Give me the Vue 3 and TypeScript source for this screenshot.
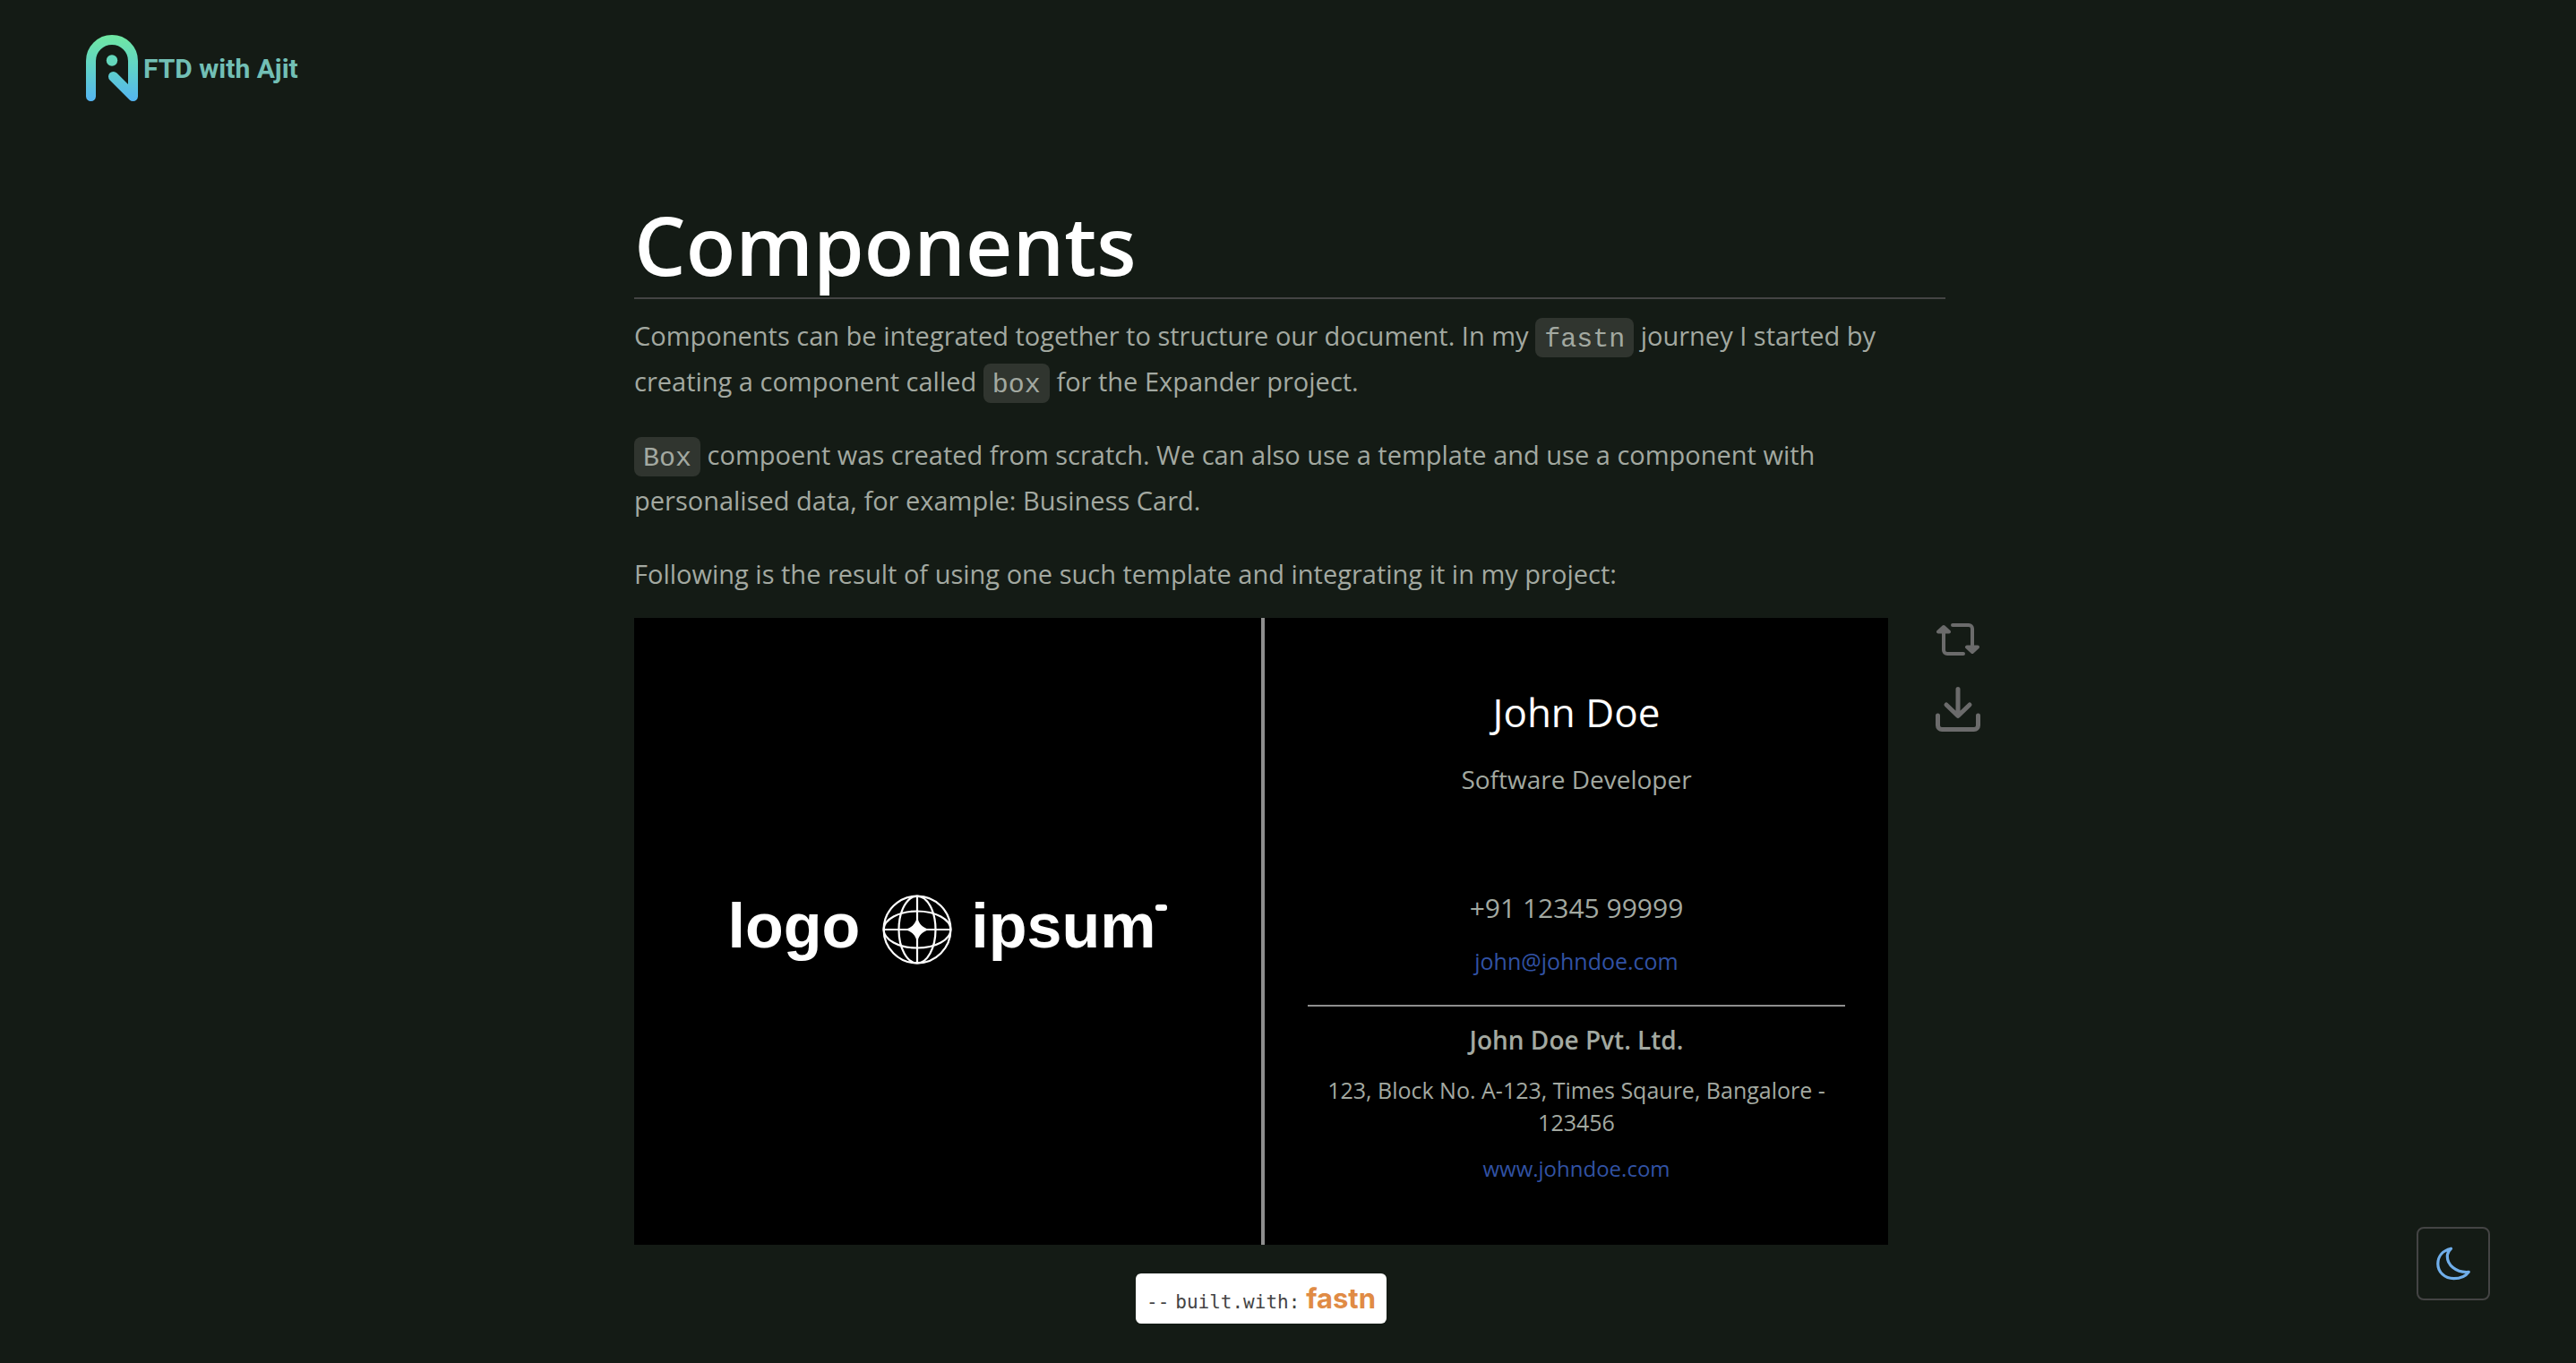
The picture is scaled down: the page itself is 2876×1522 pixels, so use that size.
<script setup lang="ts">
import { ref } from 'vue'

interface Contact {
  name: string
  role: string
  phone: string
  email: string
  company: string
  address: string
  website: string
}

const contact: Contact = {
  name: 'John Doe',
  role: 'Software Developer',
  phone: '+91 12345 99999',
  email: 'john@johndoe.com',
  company: 'John Doe Pvt. Ltd.',
  address: '123, Block No. A-123, Times Sqaure, Bangalore - 123456',
  website: 'www.johndoe.com',
}

const stacked = ref(false)
</script>

<template>
  <div class="page">
    <header class="header">
      <a class="brand" href="#">
        <svg class="brand-mark" viewBox="0 0 58 74" aria-hidden="true">
          <defs>
            <linearGradient id="brand-gradient" x1="0" y1="0" x2="0" y2="74" gradientUnits="userSpaceOnUse">
              <stop offset="0" stop-color="#70e8a2" />
              <stop offset="0.5" stop-color="#60d2c8" />
              <stop offset="1" stop-color="#54b4f2" />
            </linearGradient>
          </defs>
          <path
            d="M5.5 68.5V29a23.5 23.5 0 0 1 47 0v39.5L30.5 46.5"
            fill="none"
            stroke="url(#brand-gradient)"
            stroke-width="11"
            stroke-linecap="round"
            stroke-linejoin="round"
          />
          <circle cx="29" cy="28.5" r="6.2" fill="#64d8bc" />
        </svg>
        <span class="brand-name">FTD with Ajit</span>
      </a>
    </header>

    <main class="content">
      <h1 class="title">Components</h1>

      <div class="prose">
        <p>
          Components can be integrated together to structure our document. In my <code>fastn</code> journey I started by
          creating a component called <code>box</code> for the Expander project.
        </p>
        <p>
          <code>Box</code> compoent was created from scratch. We can also use a template and use a component with
          personalised data, for example: Business Card.
        </p>
        <p>Following is the result of using one such template and integrating it in my project:</p>
      </div>

      <div class="showcase">
        <section class="card" :class="{ stacked }">
          <div class="card-logo">
            <span class="word">logo</span>
            <svg class="globe" viewBox="0 0 78 78" fill="none" stroke="#fff" stroke-width="2.2" aria-hidden="true">
              <circle cx="39" cy="39" r="37.4" />
              <ellipse cx="39" cy="39" rx="20.5" ry="37.4" />
              <ellipse cx="39" cy="39" rx="37.4" ry="20.5" />
              <path d="M39 1v76M1 39h76" />
              <path
                d="M39 25c2 8 6 12 14 14-8 2-12 6-14 14-2-8-6-12-14-14 8-2 12-6 14-14z"
                fill="#fff"
                stroke="none"
              />
            </svg>
            <span class="word">ipsum</span>
            <svg class="mark" viewBox="0 0 13 7" aria-hidden="true">
              <rect width="13" height="7" rx="3" fill="#fff" />
            </svg>
          </div>
          <div class="card-info">
            <h2 class="name">{{ contact.name }}</h2>
            <div class="role">{{ contact.role }}</div>
            <div class="phone">{{ contact.phone }}</div>
            <a class="small" :href="'mailto:' + contact.email">{{ contact.email }}</a>
            <hr class="rule" />
            <div class="company">{{ contact.company }}</div>
            <div class="small address">{{ contact.address }}</div>
            <a class="small website" :href="'https://' + contact.website">{{ contact.website }}</a>
          </div>
        </section>

        <div class="tools">
          <button class="tool" type="button" aria-label="Flip layout" @click="stacked = !stacked">
            <svg width="48" height="36" viewBox="0 0 48 36" fill="none" stroke="currentColor" stroke-width="4" stroke-linecap="round" stroke-linejoin="round" aria-hidden="true">
              <path d="M18 2h18a4 4 0 0 1 4 4v20M30 34H12a4 4 0 0 1-4-4V10" />
              <path d="M8 4L2 9.5h12zM40 32l-6-5.5h12z" fill="currentColor" />
            </svg>
          </button>
          <button class="tool" type="button" aria-label="Download">
            <svg width="50" height="50" viewBox="0 0 50 50" fill="none" stroke="currentColor" stroke-width="5" stroke-linecap="round" stroke-linejoin="round" aria-hidden="true">
              <path d="M25 2.5v29.5M12 20l13 12.5L38 20" />
              <path d="M2.5 32v11a4.5 4.5 0 0 0 4.5 4.5h36a4.5 4.5 0 0 0 4.5-4.5V32" />
            </svg>
          </button>
        </div>
      </div>

      <div class="credit">
        <a class="badge" href="#">
          <span class="dashes">--</span>
          <span class="built">built.with:</span>
          <span class="fastn">fastn</span>
        </a>
      </div>
    </main>

    <button class="theme" type="button" aria-label="Switch theme">
      <svg width="38" height="38" viewBox="0 0 38 38" fill="none" stroke="#70aeea" stroke-width="3.2" stroke-linejoin="round" aria-hidden="true">
        <path d="M16.5 2.2C6.5 4.5 1.8 11.5 1.8 19.2 1.8 28.5 9.5 35.7 19.5 35.7 27 35.7 33 33 36.2 28.4 22 29.5 11 20 12.5 9 13 6 14.5 4 16.5 2.2z" />
      </svg>
    </button>
  </div>
</template>

<style>
body {
  background: #141b15;
}
</style>

<style scoped>
.page {
  min-height: 100vh;
  background: #141b15;
  color: #a3a9a1;
  font-family: 'Open Sans', 'Noto Sans', sans-serif;
  font-size: 29px;
}

.header {
  padding: 39px 96px;
}

.brand {
  display: inline-flex;
  align-items: center;
  gap: 6px;
  vertical-align: top;
  color: #72bfb5;
  text-decoration: none;
}

.brand-mark {
  width: 58px;
  height: 74px;
}

.brand-name {
  padding-top: 2px;
  font: 700 30px/36px 'Roboto', sans-serif;
}

.content {
  box-sizing: border-box;
  max-width: 1468px;
  margin: 0 auto;
  padding: 71px 0 44px 4px;
}

.title {
  margin: 0;
  padding-bottom: 9px;
  border-bottom: 2px solid #444444;
  color: #ffffff;
  font-size: 91px;
  font-weight: 600;
  line-height: 100px;
}

.prose {
  display: flex;
  flex-direction: column;
  gap: 31px;
  padding: 15px 0 24px;
}

.prose p {
  margin: 0;
  line-height: 51px;
}

.prose code {
  padding: 7px 10px 3px;
  border-radius: 8px;
  background: #30352f;
  font-family: 'Liberation Mono', monospace;
  font-size: 30px;
  line-height: 1;
  vertical-align: -1px;
}

.showcase {
  display: flex;
  gap: 53px;
  margin-right: -39px;
}

.card {
  display: grid;
  flex: 1;
  grid-template-columns: 1fr 1fr;
  max-width: 1400px;
  min-height: 700px;
  background: #000000;
}

.card.stacked {
  grid-template-columns: 1fr;
}

.card-logo {
  display: flex;
  align-items: center;
  justify-content: center;
  padding-bottom: 4px;
}

.word {
  padding-bottom: 8px;
  color: #ffffff;
  font: 700 70px/70px 'Liberation Sans', Arial, sans-serif;
}

.globe {
  width: 78px;
  height: 78px;
  margin: 0 21px 0 25px;
}

.mark {
  width: 13px;
  height: 7px;
  padding-bottom: 50px;
}

.card-info {
  display: flex;
  flex-direction: column;
  align-items: center;
  padding: 77px 48px 0;
  border-left: 4px solid #8e8e8e;
  font-size: 28px;
  line-height: 40px;
  text-align: center;
}

.name {
  margin: 0 0 27px;
  color: #ffffff;
  font-size: 44px;
  font-weight: 400;
  line-height: 56px;
}

.role {
  margin-bottom: 104px;
}

.phone {
  margin-bottom: 21px;
  font-size: 30px;
}

.small {
  font-size: 25px;
  line-height: 36px;
}

.card-info a {
  color: #3152a4;
  text-decoration: none;
}

.rule {
  align-self: stretch;
  height: 2px;
  margin: 31px 0 17px;
  border: 0;
  background: #8e8e8e;
}

.company {
  margin-bottom: 18px;
  font-weight: 600;
}

.address {
  margin-bottom: 16px;
}

.website {
  font-size: 24px;
}

.tools {
  display: flex;
  flex-direction: column;
  align-items: center;
  gap: 35px;
  padding-top: 6px;
}

.tool {
  display: block;
  padding: 0;
  border: 0;
  background: none;
  color: #6b6b6b;
  line-height: 0;
  cursor: pointer;
}

.credit {
  display: flex;
  justify-content: center;
  max-width: 1400px;
  padding-top: 32px;
}

.badge {
  box-sizing: border-box;
  display: flex;
  align-items: baseline;
  justify-content: space-between;
  width: 280px;
  height: 56px;
  padding: 0 12px;
  border-radius: 6px;
  background: #ffffff;
  color: #444444;
  line-height: 56px;
  text-decoration: none;
}

.dashes,
.built {
  font-family: 'DejaVu Sans Mono', monospace;
  font-size: 21px;
}

.fastn {
  color: #e08b45;
  font-family: 'Inter', sans-serif;
  font-size: 31px;
  font-weight: 700;
}

.theme {
  position: fixed;
  right: 96px;
  bottom: 70px;
  display: flex;
  align-items: center;
  justify-content: center;
  width: 82px;
  height: 82px;
  padding: 0;
  border: 2px solid #444444;
  border-radius: 8px;
  background: #141b15;
  cursor: pointer;
}
</style>
